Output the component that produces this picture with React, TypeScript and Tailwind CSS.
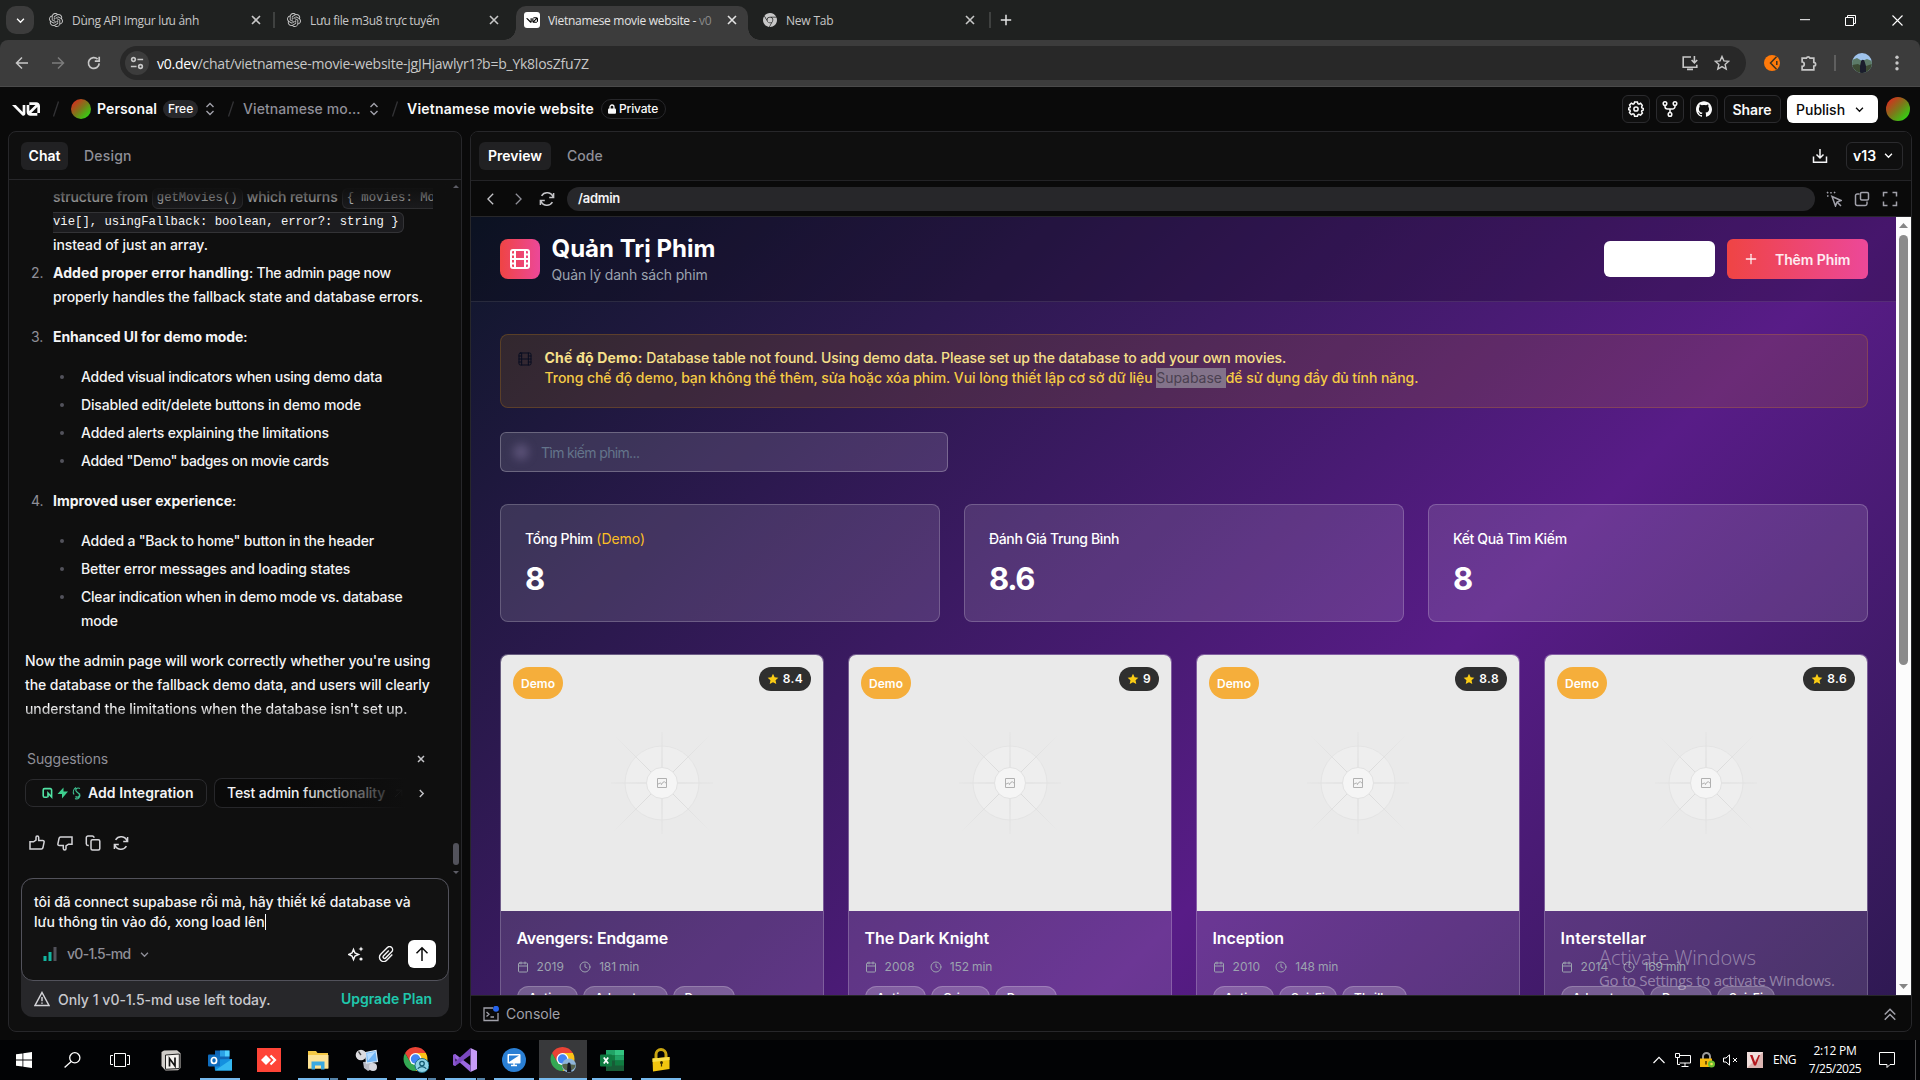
import type { ReactNode } from "react";
import { Calendar, Clock, Film, Plus } from "lucide-react";
import { SiGithub, SiGooglechrome, SiOpenai } from "react-icons/si";

/* ---------- shared drawing helpers ---------- */

function Icon({ children, size = 16, className = "", w = 1.5 }: { children: ReactNode; size?: number; className?: string; w?: number }) {
  return (
    <svg width={size} height={size} viewBox="0 0 16 16" fill="none" stroke="currentColor" strokeWidth={w} className={`shrink-0 ${className}`}>
      {children}
    </svg>
  );
}

function V0Logo({ className = "" }: { className?: string }) {
  return (
    <svg viewBox="0 0 147 70" fill="currentColor" className={`shrink-0 ${className}`}>
      <path d="M56 50.2031V14H70V60.1562C70 65.5928 65.5928 70 60.1562 70C57.5605 70 54.9982 68.9992 53.1562 67.1573L0 14H19.7969L56 50.2031Z" />
      <path d="M147 56H133V23.9531L100.953 56H133V70H96.6875C85.8144 70 77 61.1856 77 50.3125V14H91V46.1562L123.156 14H91V0H127.312C138.186 0 147 8.81439 147 19.6875V56Z" />
    </svg>
  );
}

function UpDown({ className = "" }: { className?: string }) {
  return (
    <Icon className={className} w={1.4}>
      <path d="M4.5 6L8 2.5L11.5 6M4.5 10L8 13.5L11.5 10" />
    </Icon>
  );
}

function Down({ size = 12, className = "" }: { size?: number; className?: string }) {
  return (
    <Icon size={size} className={className} w={1.9}>
      <path d="M3 5.5L8 10.5L13 5.5" />
    </Icon>
  );
}

function Refresh({ className = "" }: { className?: string }) {
  return (
    <Icon className={className}>
      <path d="M14.2 6.2A6.4 6.4 0 0 0 2.6 4.8M1.8 9.8a6.4 6.4 0 0 0 11.6 1.4M14.6 2v4.4h-4.4M1.4 14V9.6h4.4" />
    </Icon>
  );
}

/* ---------- browser chrome ---------- */

function TabClose({ active = false }: { active?: boolean }) {
  return (
    <Icon size={16} className={active ? "text-[#e3e3e3]" : "text-[#c7c7c7]"} w={1.6}>
      <path d="M4 4l8 8M12 4l-8 8" />
    </Icon>
  );
}

function TabStrip() {
  return (
    <div className="flex h-10 items-start bg-[#1f2120] text-[12px] leading-[28px] text-[#c7c7c7]">
      <div className="ml-[6px] mt-[6px] flex h-7 w-7 items-center justify-center rounded-[10px] bg-[#3c3c3c] text-white">
        <Down size={11} />
      </div>
      <div className="ml-[15px] mt-[6px] flex h-7 w-[226px] items-center">
        <SiOpenai className="h-[14px] w-[14px]" />
        <span className="ml-[9px] flex-1 whitespace-nowrap pt-[2px] tracking-[-0.3px]">Dùng API Imgur lưu ảnh</span>
        <TabClose />
        <span className="ml-[9px] h-4 w-[2px] bg-[#3f4140]" />
      </div>
      <div className="ml-[12px] mt-[6px] flex h-7 w-[215px] items-center">
        <SiOpenai className="h-[14px] w-[14px]" />
        <span className="ml-[9px] flex-1 whitespace-nowrap pt-[2px] tracking-[-0.35px]">Lưu file m3u8 trực tuyến</span>
        <TabClose />
      </div>
      <div className="ml-[2px] mt-[28px] h-3 w-3 bg-[radial-gradient(circle_at_0_0,#1f2120_11.5px,#3c3c3c_12px)]" />
      <div className="mt-[6px] flex h-[34px] w-[232px] items-start rounded-t-[10px] bg-[#3c3c3c] text-[#e3e3e3]">
        <div className="flex h-7 w-full items-center">
          <span className="ml-2 flex h-4 w-4 items-center justify-center rounded-[3px] bg-white text-black">
            <V0Logo className="h-[6px] w-3" />
          </span>
          <span className="ml-2 w-[166px] overflow-hidden whitespace-nowrap pt-[2px] tracking-[-0.3px]">
            Vietnamese movie website - <span className="text-[#8a8a8a]">v0</span>
          </span>
          <span className="ml-[10px]">
            <TabClose active />
          </span>
        </div>
      </div>
      <div className="mt-[28px] h-3 w-3 bg-[radial-gradient(circle_at_100%_0,#1f2120_11.5px,#3c3c3c_12px)]" />
      <div className="ml-[3px] mt-[6px] flex h-7 w-[228px] items-center">
        <SiGooglechrome className="h-[14px] w-[14px]" />
        <span className="ml-[9px] flex-1 pt-[2px] tracking-[-0.2px]">New Tab</span>
        <TabClose />
        <span className="ml-[11px] h-4 w-[2px] bg-[#3f4140]" />
      </div>
      <Icon size={16} className="ml-[7px] mt-3 text-[#e3e3e3]">
        <path d="M8 2.8v10.4M2.8 8h10.4" />
      </Icon>
      <div className="ml-auto flex h-10 items-center text-white">
        <Icon size={10} className="mr-[35px]" w={1.6}>
          <path d="M0 7.5h16" />
        </Icon>
        <svg width="11" height="11" viewBox="0 0 11 11" fill="none" stroke="currentColor" className="mr-9">
          <path d="M.5 2.5h8v8h-8zM2.5 2.5v-2h8v8h-2" />
        </svg>
        <svg width="11" height="11" viewBox="0 0 11 11" fill="none" stroke="currentColor" strokeWidth="1.1" className="mr-[17px]">
          <path d="M.5.5l10 10M10.5.5l-10 10" />
        </svg>
      </div>
    </div>
  );
}

function Toolbar() {
  return (
    <div className="flex h-[47px] items-center rounded-t-[8px] border-b border-[#4a4a4a] bg-[#3c3c3c] text-[#c7c7c7]">
      <Icon className="ml-[14px]">
        <path d="M14 8H2.5M8 2.5L2.5 8L8 13.5" />
      </Icon>
      <Icon className="ml-5 text-[#7c7c7c]">
        <path d="M2 8h11.5M8 2.5L13.5 8L8 13.5" />
      </Icon>
      <Icon className="ml-5" w={1.7}>
        <path d="M13.2 8.4A5.4 5.4 0 1 1 11.6 4.2M13.2 1.8v4.4H8.8" />
      </Icon>
      <div className="ml-[18px] flex h-[34px] w-[1626px] items-center rounded-full bg-[#282828]">
        <div className="ml-[5px] flex h-6 w-6 items-center justify-center rounded-full bg-[#3c3c3c]">
          <Icon size={14} w={1.9}>
            <circle cx="4" cy="4" r="2.1" />
            <path d="M8.5 4H15M1 12h6.5" />
            <circle cx="12" cy="12" r="2.1" />
          </Icon>
        </div>
        <span className="ml-[8px] flex-1 whitespace-nowrap text-[14px] tracking-[-0.24px] text-[#c7c7c7]">
          <span className="text-white">v0.dev</span>/chat/vietnamese-movie-website-jgJHjawlyr1?b=b_Yk8losZfu7Z
        </span>
        <Icon className="mr-4" w={1.6}>
          <path d="M9 2H1.2v10.2h13.6V9.8M12.4 1v6.4M9.6 5l2.8 2.8L15.2 5M5 14.4h6" />
        </Icon>
        <Icon className="mr-4" w={1.4}>
          <path d="M8 1.5l1.9 4.4 4.8.4-3.6 3.1 1.1 4.7L8 11.6l-4.2 2.5 1.1-4.7L1.3 6.3l4.8-.4z" />
        </Icon>
      </div>
      <svg width="16" height="16" viewBox="0 0 16 16" className="ml-[18px]">
        <circle cx="8" cy="8" r="8" fill="#ff7a0a" />
        <path d="M12.5 1.8L6.5 8l6 6.2" fill="none" stroke="#3c3020" strokeWidth="1.5" />
        <path d="M12.8 6v4" fill="none" stroke="#3c3020" strokeWidth="1.5" />
      </svg>
      <Icon size={17} className="ml-[20px]" w={1.6}>
        <path d="M2 3h4a1.8 1.8 0 0 1 3.4 0H13v4a1.7 1.7 0 0 1 0 3.4V14H2v-3.4a2 2 0 0 0 0-4z" />
      </Icon>
      <span className="ml-[17px] h-4 w-[2px] bg-[#5f5f5f]" />
      <svg width="20" height="20" viewBox="0 0 20 20" className="ml-4">
        <defs>
          <clipPath id="profileClip">
            <circle cx="10" cy="10" r="10" />
          </clipPath>
        </defs>
        <g clipPath="url(#profileClip)">
          <path fill="#9fc3ec" d="M0 0h20v20H0z" />
          <path fill="#5c7a68" d="M0 7l5-2 5 3 5-2 5 2v12H0z" />
          <path fill="#3c4a34" d="M0 12l6-1 5 3 9-3v9H0z" />
          <path fill="#1a1d2c" d="M9 8.5a1.8 1.8 0 0 1 3.6 0L14 13v7H8v-7z" />
        </g>
      </svg>
      <svg width="4" height="16" viewBox="0 0 4 16" fill="currentColor" className="ml-[23px]">
        <circle cx="2" cy="2.2" r="1.7" />
        <circle cx="2" cy="8" r="1.7" />
        <circle cx="2" cy="13.8" r="1.7" />
      </svg>
    </div>
  );
}

/* ---------- app header ---------- */

function Slash({ className = "" }: { className?: string }) {
  return (
    <svg width="8" height="16" viewBox="0 0 8 16" stroke="#333336" strokeWidth="1.3" className={`shrink-0 ${className}`}>
      <path d="M1.5 15.5L6.5 .5" />
    </svg>
  );
}

function AppHeader() {
  return (
    <header className="flex h-[44px] items-center pb-px text-[14px] font-semibold text-[#fafafa]">
      <V0Logo className="ml-3 h-[14px] w-7" />
      <Slash className="ml-[12px]" />
      <span className="ml-[11px] h-5 w-5 rounded-full bg-[linear-gradient(135deg,#f01820_0%,#7b7a1a_50%,#18f010_100%)]" />
      <span className="ml-[6px] tracking-[0.1px]">Personal</span>
      <span className="ml-[6px] flex h-[18px] w-[35px] items-center justify-center rounded-full bg-[#27272a] text-[12px] font-medium">Free</span>
      <UpDown className="ml-[4px] text-[#a1a1aa]" />
      <Slash className="ml-[9px]" />
      <span className="ml-[8px] w-[119px] whitespace-nowrap font-medium tracking-[0.06px] text-[#8f8f98]">Vietnamese mo...</span>
      <UpDown className="ml-[4px] text-[#a1a1aa]" />
      <Slash className="ml-[9px]" />
      <span className="ml-[8px] tracking-[0.22px]">Vietnamese movie website</span>
      <span className="ml-[7px] flex h-5 w-[65px] items-center rounded-full border border-[#27272a] pl-[6px] text-[12px] font-medium">
        <svg width="8" height="10" viewBox="0 0 8 10" className="mr-[3px]">
          <path d="M2 5V3a2 2 0 0 1 4 0v2" fill="none" stroke="currentColor" strokeWidth="1.3" />
          <rect y="4.4" width="8" height="5.4" rx="1" fill="currentColor" />
        </svg>
        <span className="tracking-[-0.15px]">Private</span>
      </span>
      <div className="ml-auto mr-[10px] flex items-center pt-px">
        <span className="flex h-7 w-7 items-center justify-center rounded-md border border-[#2b2b2e] bg-[#0f0f0f]">
          <Icon w={1.5}>
            <path d="M6.6 1h2.8l.5 1.7 1.1.5 1.6-.9 1.7 2-.7 1.7.3 1 1.8.6v1.2l-1.8.7-.3 1 .8 1.6-1.8 2-1.7-.8-1 .4-.5 1.6H6.6L6.1 13.3l-1.1-.4-1.7.8-1.8-2 .8-1.6-.4-1-1.7-.7V7.2l1.7-.5.4-1L1.6 4l1.8-1.8 1.6.9 1.1-.4z" />
            <circle cx="8" cy="8" r="2.1" />
          </Icon>
        </span>
        <span className="ml-[6px] flex h-7 w-7 items-center justify-center rounded-md border border-[#2b2b2e] bg-[#0f0f0f]">
          <Icon>
            <circle cx="3" cy="2.6" r="1.8" />
            <circle cx="13" cy="2.6" r="1.8" />
            <circle cx="8" cy="13.4" r="1.8" />
            <path d="M3 4.4v1.1a2.5 2.5 0 0 0 2.5 2.5h5A2.5 2.5 0 0 0 13 5.5V4.4M8 8v3.6" />
          </Icon>
        </span>
        <span className="ml-[6px] flex h-7 w-7 items-center justify-center rounded-md border border-[#2b2b2e] bg-[#0f0f0f]">
          <SiGithub className="h-4 w-4" />
        </span>
        <span className="ml-[6px] flex h-7 w-[57px] items-center justify-center rounded-md border border-[#2b2b2e] bg-[#0f0f0f] pr-px">Share</span>
        <span className="ml-[6px] flex h-7 w-[91px] items-center rounded-md bg-white pl-[9px] font-medium text-[#0a0a0a]">
          Publish
          <Down size={11} className="ml-[9px]" />
        </span>
        <span className="ml-2 h-6 w-6 rounded-full bg-[linear-gradient(135deg,#f01820_0%,#7b7a1a_50%,#18f010_100%)]" />
      </div>
    </header>
  );
}

/* ---------- chat panel ---------- */

function Bullet({ children, className = "" }: { children: ReactNode; className?: string }) {
  return (
    <li className="flex">
      <span className="ml-[7px] mt-[10px] h-1 w-1 shrink-0 rounded-full bg-[#52525b]" />
      <span className={`ml-[17px] whitespace-nowrap ${className}`}>{children}</span>
    </li>
  );
}

function Numbered({ n, children, className = "" }: { n: number; children: ReactNode; className?: string }) {
  return (
    <li className={`flex ${className}`}>
      <span className="w-[22px] shrink-0 font-normal text-[#8f8f98]">{n}.</span>
      <div>{children}</div>
    </li>
  );
}

const codeText = "mt-[2px] font-['Liberation_Mono',monospace] text-[12.25px] tracking-normal font-normal leading-[19px] border-[#333336] bg-[#1c1c1f]";

function ChatMessages() {
  return (
    <div className="relative flex-1 overflow-hidden">
      <div className="flex h-full flex-col pl-4 pt-[5px] font-medium leading-6 tracking-[-0.075px] text-[#f4f4f5]">
        <div className="w-[408px] overflow-hidden pl-7">
          <div className="flex h-6 items-center whitespace-nowrap">
            structure from
            <code className={`ml-[4px] mr-[4px] rounded-md border px-1 ${codeText}`}>getMovies()</code>
            which returns
            <code className={`ml-[4px] whitespace-pre rounded-l-md border border-r-0 pl-1 ${codeText}`}>{"{ movies: Mo"}</code>
          </div>
          <div className="flex h-6 items-center whitespace-nowrap">
            <code className={`whitespace-pre rounded-r-md border border-l-0 pr-1 ${codeText}`}>{"vie[], usingFallback: boolean, error?: string }"}</code>
          </div>
          <div className="h-6">instead of just an array.</div>
        </div>
        <ol className="pl-[6px]">
          <Numbered n={2} className="mt-1">
            <b className="font-bold tracking-[0.08px]">Added proper error handling</b>
            <span className="tracking-[-0.3px]">: The admin page now</span>
            <br />
            properly handles the fallback state and database errors.
          </Numbered>
          <Numbered n={3} className="mt-4">
            <b className="font-bold">Enhanced UI for demo mode</b>:
            <ul className="mt-4 space-y-1">
              <Bullet className="tracking-[-0.25px]">Added visual indicators when using demo data</Bullet>
              <Bullet className="tracking-[-0.16px]">Disabled edit/delete buttons in demo mode</Bullet>
              <Bullet className="tracking-[-0.18px]">Added alerts explaining the limitations</Bullet>
              <Bullet className="tracking-[-0.37px]">Added "Demo" badges on movie cards</Bullet>
            </ul>
          </Numbered>
          <Numbered n={4} className="mt-4">
            <b className="font-bold tracking-[0.03px]">Improved user experience</b>:
            <ul className="mt-4 space-y-1">
              <Bullet className="tracking-[-0.22px]">Added a "Back to home" button in the header</Bullet>
              <Bullet className="tracking-[-0.14px]">Better error messages and loading states</Bullet>
              <Bullet className="tracking-[-0.24px]">
                Clear indication when in demo mode vs. database
                <br />
                mode
              </Bullet>
            </ul>
          </Numbered>
        </ol>
        <p className="mt-4 whitespace-nowrap">
          Now the admin page will work correctly whether you're using
          <br />
          the database or the fallback demo data, and users will clearly
          <br />
          <span className="bg-gradient-to-b from-[#ffffff] from-35% to-[#8a8a8c] bg-clip-text text-transparent">
            understand the limitations when the database isn't set up.
          </span>
        </p>
        <div className="mt-[26px] flex items-center justify-between pl-[2px] pr-[34px] font-normal text-[#8f8f98]">
          Suggestions
          <Icon size={12} w={2} className="text-[#c4c4c8]">
            <path d="M4 4l8 8M12 4l-8 8" />
          </Icon>
        </div>
        <div className="mt-[7px] flex h-[30px] items-center font-semibold tracking-normal">
          <div className="flex h-7 w-[182px] items-center rounded-[8px] border border-[#2b2b2e] bg-[#101010] pl-4">
            <svg width="46" height="16" viewBox="0 0 46 16" fill="none">
              <path d="M5.5 12.2H2.600A1.400 1.400 0 0 1 1.200 10.800V5a1.400 1.400 0 0 1 1.400-1.400H8.200A1.400 1.400 0 0 1 9.600 5V12L6 8v4.200" stroke="#52e3a4" strokeWidth="1.6" />
              <path d="M21.500 2.500l-6 6.500h4.500v4.500l6-7h-4.500z" fill="#3ecf8e" />
              <path d="M38 3.500c-3-1.500-5.500 1-3.500 3s3.500 2 3 4-3 2-4 1M32 9.500c-1.500-2.500-.3-5.500 2-7M33 13.500c3 1.500 6-1.500 4.500-5" stroke="#3fbf8f" strokeWidth="1.200" />
            </svg>
            <span className="tracking-[0.08px]">Add Integration</span>
          </div>
          <div className="relative ml-[7px] flex h-[30px] w-[192px] items-center rounded-l-[8px] border border-r-0 border-[#27272a] bg-[#0a0a0a] pl-3 font-medium">
            <span className="whitespace-nowrap tracking-[-0.1px]">Test admin functionality</span>
            <Icon size={9} className="ml-[9px] text-[#8f8f98]">
              <path d="M2 14L14 2M4 2h10v10" />
            </Icon>
            <span className="absolute -inset-y-px right-0 w-[110px] bg-gradient-to-r from-transparent to-[#0f0f0f]" />
          </div>
          <Icon size={11} className="ml-[10px] text-[#c4c4c8]" w={2}>
            <path d="M5.5 3L10.5 8L5.5 13" />
          </Icon>
        </div>
        <div className="ml-1 mt-[27px] flex gap-3 text-[#d4d4d8]">
          <Icon>
            <path d="M1 6.8h3.500L7 5V2.200C7 1.400 7.500 1 8.200 1c.8 0 1.500.7 1.500 1.500V5.500h4c1 0 1.600.8 1.400 1.700l-1.200 5.600c-.2.8-.8 1.200-1.500 1.200H1z" />
          </Icon>
          <Icon>
            <path d="M15 9.200h-3.500L9 11v2.800c0 .8-.5 1.200-1.200 1.200-.8 0-1.500-.7-1.500-1.500V10.500h-4c-1 0-1.600-.8-1.400-1.700l1.200-5.600C2.300 2.400 2.900 2 3.600 2H15z" />
          </Icon>
          <Icon>
            <path d="M3.800 10.500H3a1.700 1.700 0 0 1-1.700-1.700V2.700A1.700 1.700 0 0 1 3 1h4.300a1.700 1.700 0 0 1 1.700 1.700" />
            <rect x="6" y="4.800" width="8.800" height="10.200" rx="1.500" />
          </Icon>
          <Refresh />
        </div>
      </div>
      <div className="absolute inset-x-0 top-0 h-[32px] bg-gradient-to-b from-[#0f0f0f] from-20% to-transparent" />
      <svg width="6" height="694" viewBox="0 0 6 694" className="absolute right-[2px] top-[4px]">
        <path d="M0 4h6L3 1z" fill="#5d5d66" />
        <rect y="659" width="6" height="22" rx="3" fill="#52525b" />
        <path d="M0 687h6l-3 3z" fill="#5d5d66" />
      </svg>
    </div>
  );
}

function Composer() {
  return (
    <div className="mx-3 mb-[14px] h-[139px] rounded-[12px] bg-[#27272a]">
      <div className="flex h-[103px] flex-col rounded-[12px] border border-[#52525b] bg-[#121212] pl-3 pt-[13px] font-medium">
        <div className="leading-5 tracking-[-0.045px] text-[#f4f4f5]">
          tôi đã connect supabase rồi mà, hãy thiết kế database và
          <div className="flex items-center tracking-[0.02px]">
            lưu thông tin vào đó, xong load lên
            <span className="h-4 w-px bg-white" />
          </div>
        </div>
        <div className="mt-2 flex h-7 items-center text-[#8f8f98]">
          <svg width="14" height="14" viewBox="0 0 14 14" className="ml-[9px]">
            <rect x=".5" y="9" width="3" height="5" fill="#12b5a0" />
            <rect x="5.5" y="5" width="3" height="9" fill="#12b5a0" />
            <rect x="10.5" y="0" width="3" height="14" fill="#52525b" />
          </svg>
          <span className="ml-[10px] pb-px tracking-[-0.7px]">v0-1.5-md</span>
          <Down size={11} className="ml-[9px]" />
          <Icon className="ml-auto text-[#f4f4f5]">
            <path d="M5.5 3.500L7 7l3.500 1.500L7 10l-1.500 3.500L4 10 .7 8.500 4 7z" />
            <path d="M13 .5l.8 1.700 1.700.8-1.700.8L13 5.500l-.8-1.700-1.700-.8 1.700-.8z" fill="currentColor" strokeWidth="0" />
            <circle cx="13" cy="13" r="1.600" fill="currentColor" strokeWidth="0" />
          </Icon>
          <Icon className="ml-[14px] text-[#f4f4f5]" w={1.4}>
            <path d="M10.800 4.500L5.400 10a1.500 1.500 0 0 0 2.100 2.100l6.200-6.300a3 3 0 0 0-4.300-4.300L2.700 8.300a4.200 4.200 0 0 0 6 6l5.600-5.700" />
          </Icon>
          <span className="ml-[14px] mr-3 flex h-7 w-7 items-center justify-center rounded-md bg-white text-[#0a0a0a]">
            <Icon>
              <path d="M8 15V1.800M2.500 7.300L8 1.800l5.500 5.500" />
            </Icon>
          </span>
        </div>
      </div>
      <div className="flex h-9 items-center pl-[13px] pr-[17px]">
        <Icon className="text-[#d4d4d8]">
          <path d="M8 1.500L15 14.500H1zM8 6v4.200M8 11.500v1.300" />
        </Icon>
        <span className="ml-2 font-medium tracking-[0.03px] text-[#c9c9ce]">Only 1 v0-1.5-md use left today.</span>
        <span className="ml-auto pb-px font-semibold text-[#1fc7ac]">Upgrade Plan</span>
      </div>
    </div>
  );
}

function ChatPanel() {
  return (
    <section className="flex w-[454px] flex-col overflow-hidden rounded-[8px] border border-[#27272a] bg-[#0f0f0f] text-[14px]">
      <div className="flex h-12 items-center border-b border-[#27272a] pl-3 font-medium">
        <span className="flex h-7 w-[47px] items-center justify-center rounded-md bg-[#212123] font-semibold text-white">Chat</span>
        <span className="ml-4 tracking-[0.2px] text-[#8f8f98]">Design</span>
      </div>
      <ChatMessages />
      <Composer />
    </section>
  );
}

/* ---------- previewed admin page ---------- */

function Poster() {
  return (
    <svg width="322" height="256" viewBox="-161 -128 322 256" fill="none" className="block bg-[#eaeaea]">
      <defs>
        <radialGradient id="ray" gradientUnits="userSpaceOnUse" cx="0" cy="0" r="68">
          <stop offset=".3" stopColor="#dcdcdc" />
          <stop offset=".75" stopColor="#e4e4e4" />
          <stop offset="1" stopColor="#eaeaea" />
        </radialGradient>
      </defs>
      <circle r="37" fill="#eeeeee" stroke="#e4e4e4" />
      <path d="M-51 .01H51M.01 -51V51M-50 -50L50 50M50 -50L-50 50" stroke="url(#ray)" />
      <circle r="15.5" fill="#f5f5f5" stroke="#e2e2e2" />
      <path d="M-4.500 -4.500h9v9h-9z" stroke="#b0b0b0" />
      <path d="M-4.500 1.300l2.800-1.300 1.600 1.200M-.8 1.800L1 -.8l1.500-.4L4.500 .6" stroke="#b0b0b0" />
    </svg>
  );
}

type Movie = { title: string; titleClass: string; rating: string; year: string; length: string; genres: string[] };

const movies: Movie[] = [
  { title: "Avengers: Endgame", titleClass: "tracking-[-0.22px]", rating: "8.4", year: "2019", length: "181 min", genres: ["Action", "Adventure", "Drama"] },
  { title: "The Dark Knight", titleClass: "tracking-[-0.03px]", rating: "9", year: "2008", length: "152 min", genres: ["Action", "Crime", "Drama"] },
  { title: "Inception", titleClass: "tracking-[-0.1px]", rating: "8.8", year: "2010", length: "148 min", genres: ["Action", "Sci-Fi", "Thriller"] },
  { title: "Interstellar", titleClass: "tracking-[0.23px]", rating: "8.6", year: "2014", length: "169 min", genres: ["Adventure", "Drama", "Sci-Fi"] },
];

function MovieCard({ movie }: { movie: Movie }) {
  return (
    <article className="relative h-[420px] overflow-hidden rounded-[8px] border border-white/20 bg-white/[0.12]">
      <Poster />
      <span className="absolute left-3 top-3 flex h-8 w-[50px] items-center justify-center rounded-full bg-[#f5ae3b] pt-px text-[12px] font-semibold text-white">
        Demo
      </span>
      <span className="absolute right-3 top-3 flex h-6 items-center rounded-full bg-[#2f2f2f] px-[8px] text-[12px] font-semibold text-white">
        <svg width="12" height="12" viewBox="0 0 24 24" fill="#facc15" className="mr-[4px]">
          <path d="M12 1.500l3.200 6.900 7.500.9-5.600 5.200 1.500 7.500L12 18.300l-6.600 3.700 1.500-7.500L1.300 9.300l7.500-.9z" />
        </svg>
        <span className="tracking-[0.35px]">{movie.rating}</span>
      </span>
      <div className="px-[15.5px] pt-4">
        <h3 className={`text-[16px] font-semibold leading-[22px] text-white ${movie.titleClass}`}>{movie.title}</h3>
        <div className="mt-[10px] flex h-4 items-center text-[12px] text-[#9ca3af]">
          <Calendar size={12} strokeWidth={2} />
          <span className="ml-2 tracking-[0.1px]">{movie.year}</span>
          <Clock size={12} strokeWidth={2} className="ml-[15px]" />
          <span className="ml-2 tracking-[-0.15px]">{movie.length}</span>
        </div>
        <div className="mt-[11px] flex gap-[5px] text-[12px] font-medium tracking-[0.1px] text-white">
          {movie.genres.map((g) => (
            <span key={g} className="flex h-[23px] items-center rounded-full border border-white/20 bg-white/20 px-[11px]">
              {g}
            </span>
          ))}
        </div>
      </div>
    </article>
  );
}

function StatCard({ label, value, demo = false }: { label: string; value: string; demo?: boolean }) {
  return (
    <div className="h-[118px] rounded-[8px] border border-white/20 bg-white/[0.12] px-6 pt-6 text-white">
      <div className="text-[14px] font-medium leading-5 tracking-[-0.36px]">
        {label}
        {demo && <span className="font-normal tracking-[-0.05px] text-[#fbbf24]"> (Demo)</span>}
      </div>
      <div className="mt-[12px] text-[31px] font-bold leading-9 tracking-[-1.3px]">{value}</div>
    </div>
  );
}

function AdminPage() {
  return (
    <div className="flex h-[778px] overflow-hidden">
      <div className="relative flex-1 overflow-hidden">
        <div className="h-[1390px] bg-[linear-gradient(to_bottom_right,#0f172a,#581c87,#0f172a)]">
          <div className="flex h-[85px] items-center border-b border-white/10 bg-black/20 pl-[29px] pr-7">
            <div className="flex h-10 w-10 items-center justify-center rounded-[8px] bg-[linear-gradient(to_right,#ef4444,#ec4899)] text-white">
              <Film size={24} strokeWidth={2} />
            </div>
            <div className="ml-[11.5px]">
              <h1 className="text-[24px] font-bold leading-8 text-white">Quản Trị Phim</h1>
              <p className="text-[14px] leading-5 tracking-[-0.14px] text-[#9ca3af]">Quản lý danh sách phim</p>
            </div>
            <span className="ml-auto h-9 w-[111px] rounded-md bg-white" />
            <span className="ml-3 flex h-10 w-[141px] items-center rounded-md bg-[linear-gradient(to_right,#ef4444,#ec4899)] text-[14px] font-medium text-white/90">
              <Plus size={16} strokeWidth={1.9} className="ml-4" />
              <span className="ml-4 font-semibold tracking-[-0.1px]">Thêm Phim</span>
            </span>
          </div>
          <div className="pl-[29px] pr-7 pt-8">
            <div className="flex h-[74px] rounded-[8px] border border-[#f59e0b]/20 bg-[#f59e0b]/[0.12] pl-4 pt-[13px] text-[14px] font-medium leading-5">
              <Film size={16} strokeWidth={1.5} className="mt-[3px] text-[#080d20]" />
              <div className="ml-[11.5px]">
                <p className="tracking-[-0.055px] text-[#f7e08a]">
                  <b className="font-bold tracking-[0.18px]">Chế độ Demo:</b> Database table not found. Using demo data. Please set up the database to add your own movies.
                </p>
                <p className="tracking-[-0.055px] text-[#f5cb45]">
                  Trong chế độ demo, bạn không thể thêm, sửa hoặc xóa phim. Vui lòng thiết lập cơ sở dữ liệu{" "}
                  <span className="inline-block bg-[#83738a] font-normal text-[#4a4050]">Supabase&nbsp;</span>
                  để sử dụng đầy đủ tính năng.
                </p>
              </div>
            </div>
            <div className="mt-6 flex h-10 w-[448px] items-center rounded-md border border-white/25 bg-white/[0.12] pl-3 text-[14px] text-[#64748b]">
              <span className="h-4 w-4 rounded-full bg-[#8a7ba8]/40 blur-[4px]" />
              <span className="ml-3 tracking-[-0.65px]">Tìm kiếm phim...</span>
            </div>
            <div className="mt-8 grid grid-cols-3 gap-6">
              <StatCard label="Tổng Phim" value="8" demo />
              <StatCard label="Đánh Giá Trung Bình" value="8.6" />
              <StatCard label="Kết Quả Tìm Kiếm" value="8" />
            </div>
            <div className="mt-8 grid grid-cols-4 gap-6">
              {movies.map((m) => (
                <MovieCard key={m.title} movie={m} />
              ))}
            </div>
          </div>
        </div>
        <div className="absolute left-[1128px] top-[727px] whitespace-nowrap font-['Open_Sans',sans-serif] text-white/40">
          <p className="text-[20px] font-light leading-[27px]">Activate Windows</p>
          <p className="text-[15px] leading-[18px] tracking-[-0.29px]">Go to Settings to activate Windows.</p>
        </div>
      </div>
      <div className="flex w-[15px] flex-col items-center bg-[#fcfcfc]">
        <svg width="9" height="5" viewBox="0 0 9 5" fill="#858585" className="mt-[6px]">
          <path d="M0 5h9L4.500 0z" />
        </svg>
        <span className="mt-[7px] h-[430px] w-[9px] rounded-full bg-[#8b8b8b]" />
        <svg width="9" height="5" viewBox="0 0 9 5" fill="#858585" className="mb-[6px] mt-auto">
          <path d="M0 0h9L4.500 5z" />
        </svg>
      </div>
    </div>
  );
}

function PreviewPanel() {
  return (
    <section className="flex w-[1442px] flex-col overflow-hidden rounded-[8px] border border-[#27272a] bg-[#0a0a0a] text-[14px] text-[#8f8f98]">
      <div className="flex h-[49px] items-center border-b border-[#232326] bg-[#0f0f0f] pb-px pl-2 font-medium">
        <span className="flex h-7 w-[72px] items-center justify-center rounded-md bg-[#212123] font-semibold text-white">Preview</span>
        <span className="ml-4">Code</span>
        <Icon className="ml-auto text-[#f4f4f5]">
          <path d="M1.500 8.500v5.800h13V8.500M8 1v9M4.500 6.500L8 10l3.500-3.500" />
        </Icon>
        <span className="ml-[18px] mr-2 flex h-7 w-[57px] items-center rounded-md border border-[#2b2b2e] pl-[6px] font-semibold text-white">
          v13
          <Down size={11} className="ml-[7px]" />
        </span>
      </div>
      <div className="flex h-9 items-center border-b border-[#27272a]">
        <Icon size={14} className="ml-[13px] text-[#c4c4c8]">
          <path d="M10.500 2L4.500 8L10.500 14" />
        </Icon>
        <Icon size={14} className="ml-[13px]">
          <path d="M5.500 2L11.500 8L5.500 14" />
        </Icon>
        <Refresh className="ml-[14px] text-[#c4c4c8]" />
        <div className="ml-[12px] flex h-6 w-[1248px] items-center rounded-full bg-[#27272a] pl-[11px] text-[13px] font-semibold tracking-[-0.25px] text-[#f4f4f5]">/admin</div>
        <Icon className="ml-[11px] text-[#a1a1aa]">
          <path d="M6 5.500L15 9.500L11 11L9.500 15ZM11.500 11.500L15 15M1 5h1.500M5 1v1.500M9 .8L8.200 2.200M1 1l1.200 1.200" />
        </Icon>
        <Icon className="ml-[12px] text-[#a1a1aa]">
          <path d="M5.500 3H3.200A1.700 1.700 0 0 0 1.500 4.700v8.100a1.700 1.700 0 0 0 1.700 1.700h8.100a1.700 1.700 0 0 0 1.700-1.700V10.500" />
          <rect x="6.5" y="1.500" width="8" height="7.500" rx="1.200" />
        </Icon>
        <Icon className="ml-[12px] text-[#a1a1aa]">
          <path d="M1.500 5.500v-4h4M10.500 1.500h4v4M14.500 10.500v4h-4M5.500 14.500h-4v-4" />
        </Icon>
      </div>
      <AdminPage />
      <div className="flex flex-1 items-center border-t border-[#27272a] pl-3">
        <Icon className="text-[#a1a1aa]" w={1.3}>
          <path d="M10 2H1v12.500h14V7M3.500 6L6 8.300 3.500 10.600M7.500 11H11" />
          <circle cx="13" cy="2.800" r="3" fill="#2563eb" strokeWidth="0" />
        </Icon>
        <span className="ml-[7px] text-[#a1a1aa]">Console</span>
        <Icon size={14} className="ml-auto mr-[14px] text-[#a1a1aa]" w={1.7}>
          <path d="M2 8.500L8 2.500L14 8.500M2 14.500L8 8.500L14 14.500" />
        </Icon>
      </div>
    </section>
  );
}

/* ---------- Windows taskbar ---------- */

function ChromeColor() {
  return (
    <>
      <path d="M3.220 12A24 24 0 0 1 44.780 12H24A12 12 0 0 0 13.610 18z" fill="#ea4335" />
      <path d="M13.610 30L3.220 12A24 24 0 0 0 24 48L34.390 30z" fill="#34a853" />
      <path d="M34.390 30L24 48A24 24 0 0 0 44.780 12H24z" fill="#fbc116" />
      <path d="M3.220 12L13.600 30L24 12z" fill="#ea4335" />
      <circle cx="24" cy="24" r="12" fill="#fff" />
      <circle cx="24" cy="24" r="9.400" fill="#4285f4" />
    </>
  );
}

function TaskItem({ children, run = "none", gap = false }: { children: ReactNode; run?: "none" | "one" | "many" | "active"; gap?: boolean }) {
  return (
    <div className={`flex h-10 w-12 shrink-0 flex-col items-center ${gap ? "mr-px" : ""} ${run === "active" ? "bg-[#38393b]" : ""}`}>
      <div className="flex h-[38px] items-center justify-center pt-[2px]">{children}</div>
      {run === "one" && <span className="h-[2px] w-10 bg-[#76b9ed]" />}
      {run === "active" && <span className="h-[2px] w-12 bg-[#76b9ed]" />}
      {run === "many" && (
        <span className="flex h-[2px] w-10 gap-px">
          <span className="w-[31px] bg-[#76b9ed]" />
          <span className="w-2 bg-[#5583a8]" />
        </span>
      )}
    </div>
  );
}

function Taskbar() {
  return (
    <footer className="flex h-10 items-center bg-[#020305] font-['Open_Sans',sans-serif] text-[12px] text-white">
      <TaskItem>
        <svg width="16" height="16" viewBox="0 0 16 16" fill="#fff">
          <path d="M0 2.300l6.500-.9v6.200H0zM7.300 1.300L16 0v7.600H7.300zM0 8.400h6.500v6.200L0 13.700zM7.300 8.400H16V16l-8.700-1.300z" />
        </svg>
      </TaskItem>
      <TaskItem>
        <svg width="17" height="16" viewBox="0 0 17 16" fill="none" stroke="#fff" strokeWidth="1.300">
          <circle cx="10.800" cy="5.800" r="5.100" />
          <path d="M7.200 9.500L.6 15.500" />
        </svg>
      </TaskItem>
      <TaskItem>
        <svg width="20" height="14" viewBox="0 0 20 14" fill="none" stroke="#fff">
          <path d="M4.500.5h11v13h-11zM3 2.500H.5v9H3M17 2.500h2.500v9H17" />
        </svg>
      </TaskItem>
      <span className="w-[3px]" />
      <TaskItem gap>
        <svg width="20" height="21" viewBox="0 0 20 21">
          <path d="M.5 2L3 .5 16 .3l3.500 3V18L17 20.300 4.500 20.500.5 16z" fill="#cfccc8" />
          <path d="M4.500 5L18.300 4v14.500L4.500 19.300z" fill="#f4f2ef" stroke="#222" />
          <path d="M8.500 16.500V8.500l5.500 7.500V7.500" fill="none" stroke="#111" strokeWidth="1.700" />
        </svg>
      </TaskItem>
      <TaskItem gap run="one">
        <svg width="24" height="22" viewBox="0 0 24 22">
          <path d="M7 1.500h14.500v12H7z" fill="#1066b5" />
          <path d="M12 1.500h5v6h-5z" fill="#2ba1e6" />
          <path d="M17 1.500h4.500v6H17z" fill="#50d0ff" />
          <path d="M6 10.500l18-.5v11.500H7z" fill="#1490df" />
          <path d="M7 21.500L24 10v11.500z" fill="#35b8f1" />
          <rect y="5.500" width="12" height="12" rx="1" fill="#0f6cbd" />
          <ellipse cx="6" cy="11.500" rx="2.600" ry="3" fill="none" stroke="#fff" strokeWidth="1.700" />
        </svg>
      </TaskItem>
      <TaskItem gap>
        <svg width="24" height="24" viewBox="0 0 24 24">
          <path d="M0 0h24v24H0z" fill="#fe4437" />
          <path d="M9 7l5 5-5 5-5-5z" fill="#fff" />
          <path d="M13.500 7.500L18 12l-4.500 4.500" fill="none" stroke="#fff" strokeWidth="2.200" />
        </svg>
      </TaskItem>
      <TaskItem gap run="many">
        <svg width="22" height="20" viewBox="0 0 22 20">
          <path d="M1 1h8l1.500 2H21v15.500H1z" fill="#f5c945" />
          <path d="M1 5h20.500v13.500H1z" fill="#fde396" />
          <path d="M4.500 19.500v-8h13v8h-3.500v-4H8v4z" fill="#3aa9e0" />
        </svg>
      </TaskItem>
      <TaskItem gap run="one">
        <svg width="24" height="23" viewBox="0 0 24 23">
          <path d="M8 13l9-1 2 7-6 3-4-3z" fill="#b9bcc6" />
          <path d="M10.500 3.500L21 1.500l1.500 11-11 1.500z" fill="#6fb4f5" stroke="#dbe9f6" strokeWidth="1.200" />
          <path d="M12 4.500l8.500-1.700-7.500 9z" fill="#b5dcff" />
          <circle cx="6" cy="6" r="5.300" fill="#dcdce0" />
          <path d="M6 6L3.500 2.500" stroke="#444" strokeWidth="1.300" />
          <circle cx="18" cy="18" r="4" fill="#d6d7de" />
        </svg>
      </TaskItem>
      <TaskItem gap run="many">
        <svg width="26" height="26" viewBox="-1 0 52 52">
          <ChromeColor />
          <circle cx="37" cy="37" r="14" fill="#8fd3e6" stroke="#1d6f86" strokeWidth="2" />
          <circle cx="37" cy="33" r="4.500" fill="none" stroke="#125a70" strokeWidth="2.500" />
          <path d="M28.500 43.500c4-6 13-6 17 0" fill="none" stroke="#125a70" strokeWidth="2.500" />
        </svg>
      </TaskItem>
      <TaskItem gap run="many">
        <svg width="24" height="24" viewBox="0 0 24 24">
          <path d="M17.500 0L24 3v18l-6.500 3z" fill="#c69bf7" />
          <path d="M17.500 24L0 8.500V7l2.200-1L17.500 17.500z" fill="#9a68e0" />
          <path d="M17.500 0v7L2.200 18 0 17v-1.500z" fill="#7a48c0" />
          <path d="M0 7l2.500-1v12L0 17z" fill="#8b57d0" />
        </svg>
      </TaskItem>
      <TaskItem gap run="one">
        <svg width="24" height="24" viewBox="0 0 24 24">
          <circle cx="12" cy="12" r="12" fill="#2a7fd4" />
          <rect x="5.500" y="6" width="13" height="9.500" rx="1" fill="#fff" />
          <path d="M7 7.500h10L7 14z" fill="#2a7fd4" />
          <path d="M9 17.500h6M12 15v2.500" stroke="#fff" strokeWidth="1.500" />
        </svg>
      </TaskItem>
      <TaskItem run="active">
        <svg width="26" height="26" viewBox="-1 0 52 52">
          <ChromeColor />
          <circle cx="37" cy="37" r="14" fill="#8eb4d8" />
          <path d="M23.500 35c8-4 18 2 27 0a14 14 0 0 1-27 3z" fill="#55624a" />
          <path d="M34 34a3 3 0 0 1 6 0l2 16h-9z" fill="#181a26" />
        </svg>
      </TaskItem>
      <span className="w-px" />
      <TaskItem gap run="one">
        <svg width="24" height="21" viewBox="0 0 24 21">
          <path d="M6 0h18v21H6z" fill="#185c37" />
          <path d="M6 0h9v5.500H6z" fill="#21a366" />
          <path d="M15 0h9v5.500h-9z" fill="#33c481" />
          <path d="M6 5.500h9v5H6z" fill="#107c41" />
          <path d="M15 5.500h9v5h-9z" fill="#21a366" />
          <path d="M15 10.500h9v5h-9z" fill="#107c41" />
          <rect y="4.500" width="12" height="12" rx="1" fill="#0f7a40" />
          <path d="M3.800 7.500l4.400 6M8.200 7.500l-4.400 6" stroke="#fff" strokeWidth="1.800" />
        </svg>
      </TaskItem>
      <TaskItem run="one">
        <svg width="20" height="24" viewBox="0 0 20 24">
          <path d="M5 11V6.500a5 5 0 0 1 10 0V11" fill="none" stroke="#c9a511" strokeWidth="3" />
          <path d="M1.500 10.500L18.500 9v12L2 23.500z" fill="#f2c50f" />
          <path d="M1.500 10.500L18.500 9v3L1.600 14z" fill="#fbe04a" />
          <circle cx="10.500" cy="14.500" r="1.500" fill="#3b2c05" />
          <path d="M10.500 15v3.500" stroke="#3b2c05" strokeWidth="1.200" />
        </svg>
      </TaskItem>

      <div className="ml-auto flex h-10 items-center">
        <svg width="12" height="8" viewBox="0 0 12 8" fill="none" stroke="#fff" strokeWidth="1.200">
          <path d="M.5 7L6 1.300 11.500 7" />
        </svg>
        <svg width="16" height="14" viewBox="0 0 16 14" fill="none" stroke="#fff" className="ml-[10px]">
          <path d="M4.500 2.500h11v7.500h-11M10 10v3M6.500 13.500h7M.5.500h4v4h-4zM2.500 4.500v7h2.500" />
        </svg>
        <svg width="16" height="16" viewBox="0 0 16 16" className="ml-2">
          <path d="M4 7V4.500a3.500 3.500 0 0 1 7 0V7" fill="none" stroke="#9a9a9a" strokeWidth="2" />
          <rect x="1" y="6.500" width="12" height="8.500" fill="#f6b90c" />
          <path d="M7 9v3.500" stroke="#4a3300" strokeWidth="1.500" />
          <circle cx="12.500" cy="12" r="3.500" fill="#6cbf2f" />
          <circle cx="12.500" cy="12" r="1.300" fill="#f4e25a" />
        </svg>
        <svg width="15" height="12" viewBox="0 0 15 12" fill="none" stroke="#fff" className="ml-2">
          <path d="M.5 4h2.500L6.500 .8v10.400L3 8H.5zM10 4l4 4M14 4l-4 4" />
        </svg>
        <svg width="16" height="16" viewBox="0 0 16 16" className="ml-[9px]">
          <path d="M0 0h16v16H0z" fill="#f0dedc" />
          <path d="M0 16L16 0v16z" fill="#dcb5b2" />
          <path d="M3 3h2.500l2.700 7.500L11.500 3H13L9 13.500H7z" fill="#b3161c" />
        </svg>
        <span className="ml-[10px] w-6 tracking-[-0.45px]">ENG</span>
        <div className="ml-[7px] w-[62px] text-center leading-[18px]">
          <div className="tracking-[-0.25px]">2:12 PM</div>
          <div className="tracking-[-0.5px]">7/25/2025</div>
        </div>
        <svg width="16" height="16" viewBox="0 0 16 16" fill="none" stroke="#fff" className="ml-[13px]">
          <path d="M.5.500h15v12H11L8 15.500V12.500H.5z" />
        </svg>
        <span className="ml-5 mr-1 h-10 w-px bg-[#4c4c4e]" />
      </div>
    </footer>
  );
}

export default function App() {
  return (
    <div className="flex h-[1080px] w-[1920px] flex-col overflow-hidden bg-[#0a0a0a] font-['Inter',sans-serif]">
      <div className="bg-[#1f2120] font-['Open_Sans',sans-serif]">
        <TabStrip />
        <Toolbar />
      </div>
      <AppHeader />
      <main className="mb-2 flex flex-1 gap-2 px-2">
        <ChatPanel />
        <PreviewPanel />
      </main>
      <Taskbar />
    </div>
  );
}
